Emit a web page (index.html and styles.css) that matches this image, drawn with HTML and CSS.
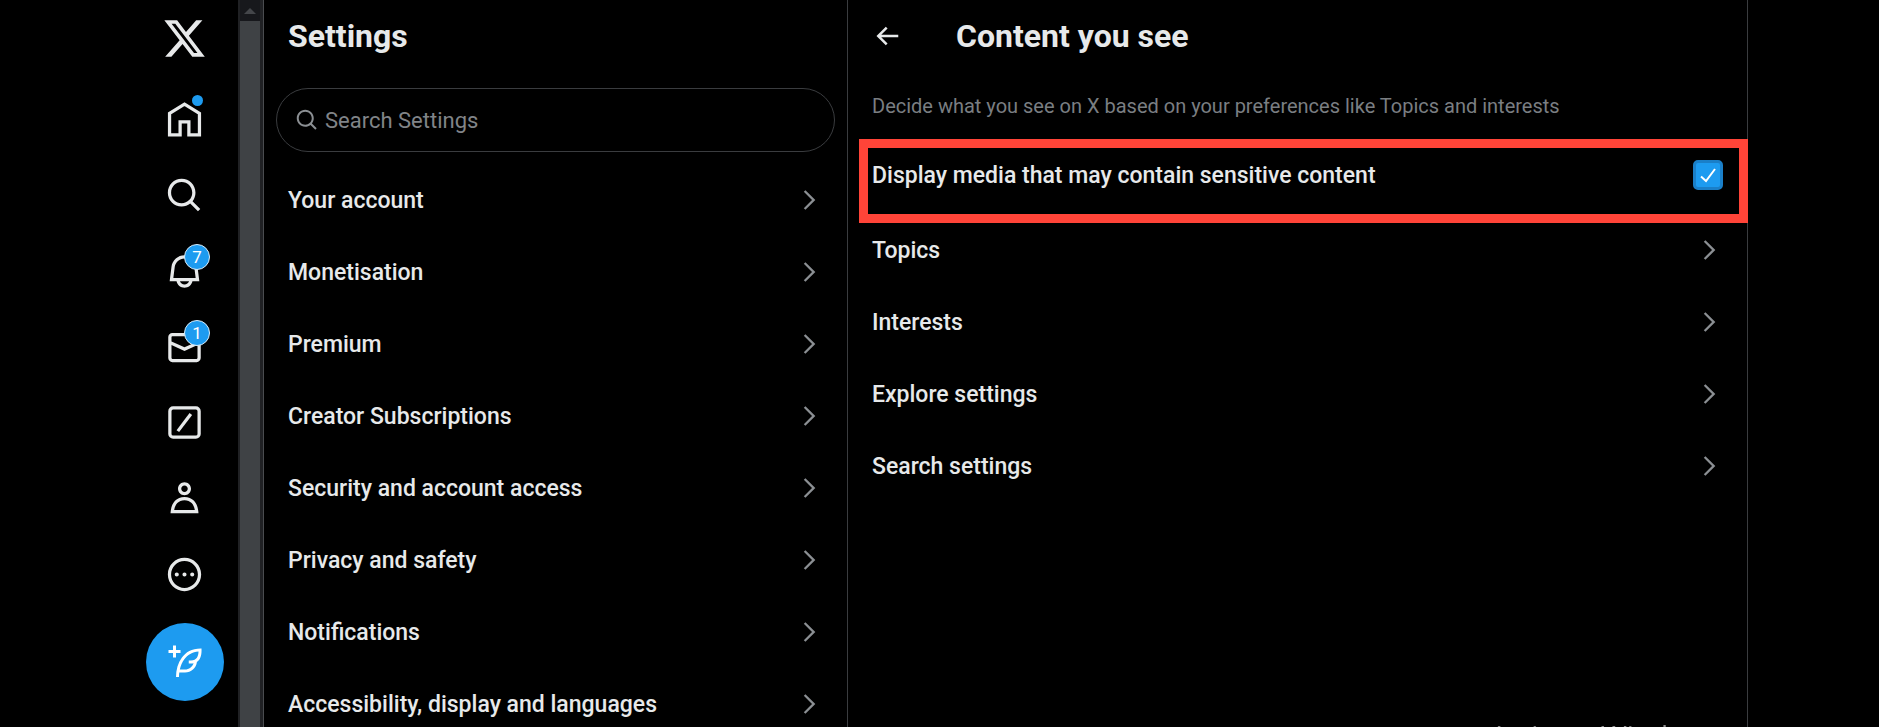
FILE: index.html
```html
<!DOCTYPE html>
<html lang="en">
<head>
<meta charset="utf-8">
<meta name="viewport" content="width=device-width, initial-scale=1.0">
<title>Content you see / X</title>
<link rel="stylesheet" href="styles.css">
</head>
<body>
<div class="page">
	<nav class="sidebar" aria-label="Primary">
		<a class="logo" href="#" aria-label="X">
			<svg viewBox="0 0 24 24"><path d="M18.244 2.25h3.308l-7.227 8.26 8.502 11.24H16.17l-5.214-6.817L4.99 21.75H1.68l7.73-8.835L1.254 2.25H8.08l4.713 6.231zm-1.161 17.52h1.833L7.084 4.126H5.117z"/></svg>
		</a>
		<ul class="nav-list">
			<li><a href="#" aria-label="Home">
				<svg class="line" viewBox="0 0 24 24"><path d="M2.8 8.3 12 2.5l9.2 5.8v13.2h-6.5v-8.1H9.3v8.1H2.8z"/></svg>
				<span class="dot"></span>
			</a></li>
			<li><a href="#" aria-label="Explore">
				<svg viewBox="0 0 24 24"><path d="M10.25 3.75c-3.59 0-6.5 2.91-6.5 6.5s2.91 6.5 6.5 6.5c1.795 0 3.419-.726 4.596-1.904 1.178-1.177 1.904-2.801 1.904-4.596 0-3.59-2.91-6.5-6.5-6.5zm-8.5 6.5c0-4.694 3.806-8.5 8.5-8.5s8.5 3.806 8.5 8.5c0 1.986-.682 3.815-1.824 5.262l4.781 4.781-1.414 1.414-4.781-4.781c-1.447 1.142-3.276 1.824-5.262 1.824-4.694 0-8.5-3.806-8.5-8.5z"/></svg>
			</a></li>
			<li><a href="#" aria-label="Notifications">
				<svg viewBox="0 0 24 24"><path d="M19.993 9.042C19.48 5.017 16.054 2 11.996 2s-7.49 3.021-7.999 7.051L2.866 18H7.1c.463 2.282 2.481 4 4.9 4s4.437-1.718 4.9-4h4.236l-1.143-8.958zM12 20c-1.306 0-2.417-.835-2.829-2h5.658c-.412 1.165-1.523 2-2.829 2zm-6.866-4l.847-6.698C6.364 6.272 8.941 4 11.996 4s5.627 2.268 6.013 5.295L18.864 16H5.134z"/></svg>
				<span class="badge">7</span>
			</a></li>
			<li><a href="#" aria-label="Messages">
				<svg viewBox="0 0 24 24"><path d="M1.998 5.5c0-1.381 1.119-2.5 2.5-2.5h15c1.381 0 2.5 1.119 2.5 2.5v13c0 1.381-1.119 2.5-2.5 2.5h-15c-1.381 0-2.5-1.119-2.5-2.5v-13zm2.5-.5c-.276 0-.5.224-.5.5v2.764l8 3.638 8-3.636V5.5c0-.276-.224-.5-.5-.5h-15zm15.5 5.463l-8 3.636-8-3.638V18.5c0 .276.224.5.5.5h15c.276 0 .5-.224.5-.5v-8.037z"/></svg>
				<span class="badge">1</span>
			</a></li>
			<li><a href="#" aria-label="Grok">
				<svg class="line" viewBox="0 0 24 24"><rect x="3" y="3" width="18" height="18" rx="2"/><path d="M7.9 17.3 15.9 6.8"/></svg>
			</a></li>
			<li><a href="#" aria-label="Profile">
				<svg viewBox="0 0 24 24"><path d="M5.651 19h12.698c-.337-1.8-1.023-3.21-1.945-4.19C15.318 13.65 13.838 13 12 13s-3.317.65-4.404 1.81c-.922.98-1.608 2.39-1.945 4.19zm.486-5.56C7.627 11.85 9.648 11 12 11s4.373.85 5.863 2.44c1.477 1.58 2.366 3.8 2.632 6.46l.11 1.1H3.395l.11-1.1c.266-2.66 1.155-4.88 2.632-6.46zM12 4c-1.105 0-2 .9-2 2s.895 2 2 2 2-.9 2-2-.895-2-2-2zM8 6c0-2.21 1.791-4 4-4s4 1.79 4 4-1.791 4-4 4-4-1.79-4-4z"/></svg>
			</a></li>
			<li><a href="#" aria-label="More">
				<svg viewBox="0 0 24 24"><path d="M3.75 12c0-4.56 3.69-8.25 8.25-8.25s8.25 3.69 8.25 8.25-3.69 8.25-8.25 8.25S3.75 16.56 3.75 12zM12 1.75C6.34 1.75 1.75 6.34 1.75 12S6.34 22.25 12 22.25 22.25 17.66 22.25 12 17.66 1.75 12 1.75zm-4.75 11.5c.69 0 1.25-.56 1.25-1.25s-.56-1.25-1.25-1.25S6 11.31 6 12s.56 1.25 1.25 1.25zm9.5 0c.69 0 1.25-.56 1.25-1.25s-.56-1.25-1.25-1.25-1.25.56-1.25 1.25.56 1.25 1.25 1.25zM13.25 12c0 .69-.56 1.25-1.25 1.25s-1.25-.56-1.25-1.25.56-1.25 1.25-1.25 1.25.56 1.25 1.25z"/></svg>
			</a></li>
		</ul>
		<button class="compose" type="button" aria-label="Post">
			<svg viewBox="0 0 24 24"><path d="M23 3c-6.62-.1-10.38 2.421-13.05 6.03C7.29 12.61 6 17.331 6 22h2c0-1.007.07-2.012.19-3H12c4.1 0 7.48-3.082 7.94-7.054C22.79 10.147 23.17 6.359 23 3zm-7 8h-1.5v2H16c.63-.016 1.2-.08 1.72-.188C16.95 15.24 14.68 17 12 17H8.55c.57-2.512 1.57-4.851 3-6.78 2.16-2.912 5.29-4.911 9.45-5.187C20.95 8.079 19.9 11 16 11zM4 9V6H1V4h3V1h2v3h3v2H6v3H4z"/></svg>
		</button>
	</nav>

	<div class="scrollbar" aria-hidden="true">
		<div class="scroll-up"></div>
		<div class="scroll-thumb"></div>
	</div>

	<section class="settings">
		<header class="head">
			<h1>Settings</h1>
		</header>
		<form class="search">
			<svg viewBox="0 0 24 24"><path d="M10.25 3.75c-3.59 0-6.5 2.91-6.5 6.5s2.91 6.5 6.5 6.5c1.795 0 3.419-.726 4.596-1.904 1.178-1.177 1.904-2.801 1.904-4.596 0-3.59-2.91-6.5-6.5-6.5zm-8.5 6.5c0-4.694 3.806-8.5 8.5-8.5s8.5 3.806 8.5 8.5c0 1.986-.682 3.815-1.824 5.262l4.781 4.781-1.414 1.414-4.781-4.781c-1.447 1.142-3.276 1.824-5.262 1.824-4.694 0-8.5-3.806-8.5-8.5z"/></svg>
			<input type="text" placeholder="Search Settings" aria-label="Search Settings">
		</form>
		<a class="row" href="#">Your account <svg class="chevron" viewBox="0 0 24 24"><path d="M14.586 12L7.543 4.96l1.414-1.42L17.414 12l-8.457 8.46-1.414-1.42L14.586 12z"/></svg></a>
		<a class="row" href="#">Monetisation <svg class="chevron" viewBox="0 0 24 24"><path d="M14.586 12L7.543 4.96l1.414-1.42L17.414 12l-8.457 8.46-1.414-1.42L14.586 12z"/></svg></a>
		<a class="row" href="#">Premium <svg class="chevron" viewBox="0 0 24 24"><path d="M14.586 12L7.543 4.96l1.414-1.42L17.414 12l-8.457 8.46-1.414-1.42L14.586 12z"/></svg></a>
		<a class="row" href="#">Creator Subscriptions <svg class="chevron" viewBox="0 0 24 24"><path d="M14.586 12L7.543 4.96l1.414-1.42L17.414 12l-8.457 8.46-1.414-1.42L14.586 12z"/></svg></a>
		<a class="row" href="#">Security and account access <svg class="chevron" viewBox="0 0 24 24"><path d="M14.586 12L7.543 4.96l1.414-1.42L17.414 12l-8.457 8.46-1.414-1.42L14.586 12z"/></svg></a>
		<a class="row" href="#">Privacy and safety <svg class="chevron" viewBox="0 0 24 24"><path d="M14.586 12L7.543 4.96l1.414-1.42L17.414 12l-8.457 8.46-1.414-1.42L14.586 12z"/></svg></a>
		<a class="row" href="#">Notifications <svg class="chevron" viewBox="0 0 24 24"><path d="M14.586 12L7.543 4.96l1.414-1.42L17.414 12l-8.457 8.46-1.414-1.42L14.586 12z"/></svg></a>
		<a class="row" href="#">Accessibility, display and languages <svg class="chevron" viewBox="0 0 24 24"><path d="M14.586 12L7.543 4.96l1.414-1.42L17.414 12l-8.457 8.46-1.414-1.42L14.586 12z"/></svg></a>
	</section>

	<main class="detail">
		<header class="head">
			<button class="back" type="button" aria-label="Back">
				<svg viewBox="0 0 24 24"><path d="M7.414 13l5.043 5.04-1.414 1.42L3.586 12l7.457-7.46 1.414 1.42L7.414 11H21v2H7.414z"/></svg>
			</button>
			<h2>Content you see</h2>
		</header>
		<p class="note">Decide what you see on X based on your preferences like Topics and interests</p>
		<div class="highlight">
			<label class="row" for="sensitive">Display media that may contain sensitive content
				<span class="check">
					<input type="checkbox" id="sensitive" checked>
					<svg viewBox="0 0 30 30"><path d="M8 16.500l5 4.500 9-12"/></svg>
				</span>
			</label>
		</div>
		<a class="row" href="#">Topics <svg class="chevron" viewBox="0 0 24 24"><path d="M14.586 12L7.543 4.96l1.414-1.42L17.414 12l-8.457 8.46-1.414-1.42L14.586 12z"/></svg></a>
		<a class="row" href="#">Interests <svg class="chevron" viewBox="0 0 24 24"><path d="M14.586 12L7.543 4.96l1.414-1.42L17.414 12l-8.457 8.46-1.414-1.42L14.586 12z"/></svg></a>
		<a class="row" href="#">Explore settings <svg class="chevron" viewBox="0 0 24 24"><path d="M14.586 12L7.543 4.96l1.414-1.42L17.414 12l-8.457 8.46-1.414-1.42L14.586 12z"/></svg></a>
		<a class="row" href="#">Search settings <svg class="chevron" viewBox="0 0 24 24"><path d="M14.586 12L7.543 4.96l1.414-1.42L17.414 12l-8.457 8.46-1.414-1.42L14.586 12z"/></svg></a>
	</main>
</div>
<div class="watermark">Activate Windows</div>
</body>
</html>
```

FILE: styles.css
```css
*{
	box-sizing: border-box;
	margin: 0;
	padding: 0;
}

body{
	background: #000;
	color: #e7e9ea;
	font-family: Roboto, "Liberation Sans", sans-serif;
	font-size: 23px;
	overflow: hidden;
}

a{
	color: inherit;
	text-decoration: none;
}

svg{
	display: block;
	fill: currentColor;
}

svg.line{
	fill: none;
	stroke: currentColor;
	stroke-width: 2;
}

.page{
	display: grid;
	grid-template-columns: 238px 26px 584fr 900fr;
	height: 100vh;
	padding-right: 131px;
	overflow: hidden;
}

/* left icon bar */
.sidebar{
	display: flex;
	flex-direction: column;
	align-items: center;
	padding-left: 131px;
}

.logo{
	padding: 16px 0;
}

.logo svg{
	width: 45px;
	height: 45px;
}

.nav-list{
	display: flex;
	flex-direction: column;
	height: 530px;
	margin-top: 5px;
	list-style: none;
}

.nav-list li{
	display: flex;
	flex: 1;
	align-items: center;
}

.nav-list a{
	position: relative;
}

.nav-list svg{
	width: 39px;
	height: 39px;
}

.dot{
	position: absolute;
	top: -5px;
	right: 1px;
	width: 11px;
	height: 11px;
	border-radius: 50%;
	background: #1d9bf0;
}

.badge{
	position: absolute;
	top: -8px;
	right: -6px;
	width: 26px;
	height: 26px;
	border: 1px solid #d8ecfa;
	border-radius: 50%;
	background: #1d9bf0;
	color: #fff;
	font-size: 17px;
	line-height: 24px;
	text-align: center;
}

.compose{
	display: grid;
	flex: none;
	place-items: center;
	width: 78px;
	height: 78px;
	margin-top: 11px;
	border: 0;
	border-radius: 50%;
	background: #1d9bf0;
	color: #fff;
}

.compose svg{
	width: 36px;
	height: 36px;
}

/* scrollbar */
.scrollbar{
	display: flex;
	flex-direction: column;
	padding: 0 3px 0 2px;
	background: #202124;
	border-right: 1px solid #4a4c4f;
}

.scroll-up{
	display: grid;
	place-items: center;
	height: 21px;
	background: #17181c;
}

.scroll-up::before{
	content: "";
	border: 6px solid transparent;
	border-top: 0;
	border-bottom-color: #44464a;
}

.scroll-thumb{
	flex: 1;
	background: #3f4245;
}

/* columns */
.settings, .detail{
	border-right: 1px solid #3a3c3f;
}

.head{
	display: flex;
	align-items: center;
	gap: 54px;
	height: 72px;
	padding: 0 24px;
}

h1, h2{
	font-size: 32px;
	font-weight: 700;
}

.back{
	border: 0;
	background: none;
	color: #e7e9ea;
}

.back svg{
	width: 30px;
	height: 30px;
}

.search{
	display: flex;
	align-items: center;
	gap: 6px;
	height: 64px;
	margin: 16px 12px 12px;
	padding: 0 18px;
	border: 1px solid #3a3c3f;
	border-radius: 32px;
	color: #8b8f93;
}

.search svg{
	width: 24px;
	height: 24px;
}

.search input{
	flex: 1;
	border: 0;
	outline: none;
	background: none;
	color: #e7e9ea;
	font: inherit;
	font-size: 22px;
}

.search input::placeholder{
	color: #808488;
}

.row{
	display: flex;
	align-items: center;
	justify-content: space-between;
	height: 72px;
	padding: 0 24px;
	font-weight: 500;
}

.chevron{
	width: 28px;
	height: 28px;
	color: #8b8f93;
}

.note{
	padding: 2px 24px 0;
	color: #7a7e82;
	font-size: 20px;
	line-height: 65px;
}

.highlight{
	position: relative;
	padding-bottom: 3px;
}

.highlight::after{
	content: "";
	position: absolute;
	top: 0;
	right: -1px;
	bottom: -9px;
	left: 11px;
	border: 9px solid #ff4438;
	pointer-events: none;
}

.check{
	display: grid;
}

.check input, .check svg{
	grid-area: 1 / 1;
	width: 30px;
	height: 30px;
}

.check input{
	appearance: none;
	border: 3px solid #1a7fc8;
	border-radius: 5px;
	background: #1d9bf0;
}

.check svg{
	fill: none;
	stroke: #fff;
	stroke-width: 2;
	pointer-events: none;
}

/* sits mostly below the bottom edge */
.watermark{
	position: fixed;
	right: 159px;
	bottom: -26px;
	color: #8a8a8a;
	font-family: "Open Sans", sans-serif;
	font-size: 28px;
	line-height: 36px;
}
```
